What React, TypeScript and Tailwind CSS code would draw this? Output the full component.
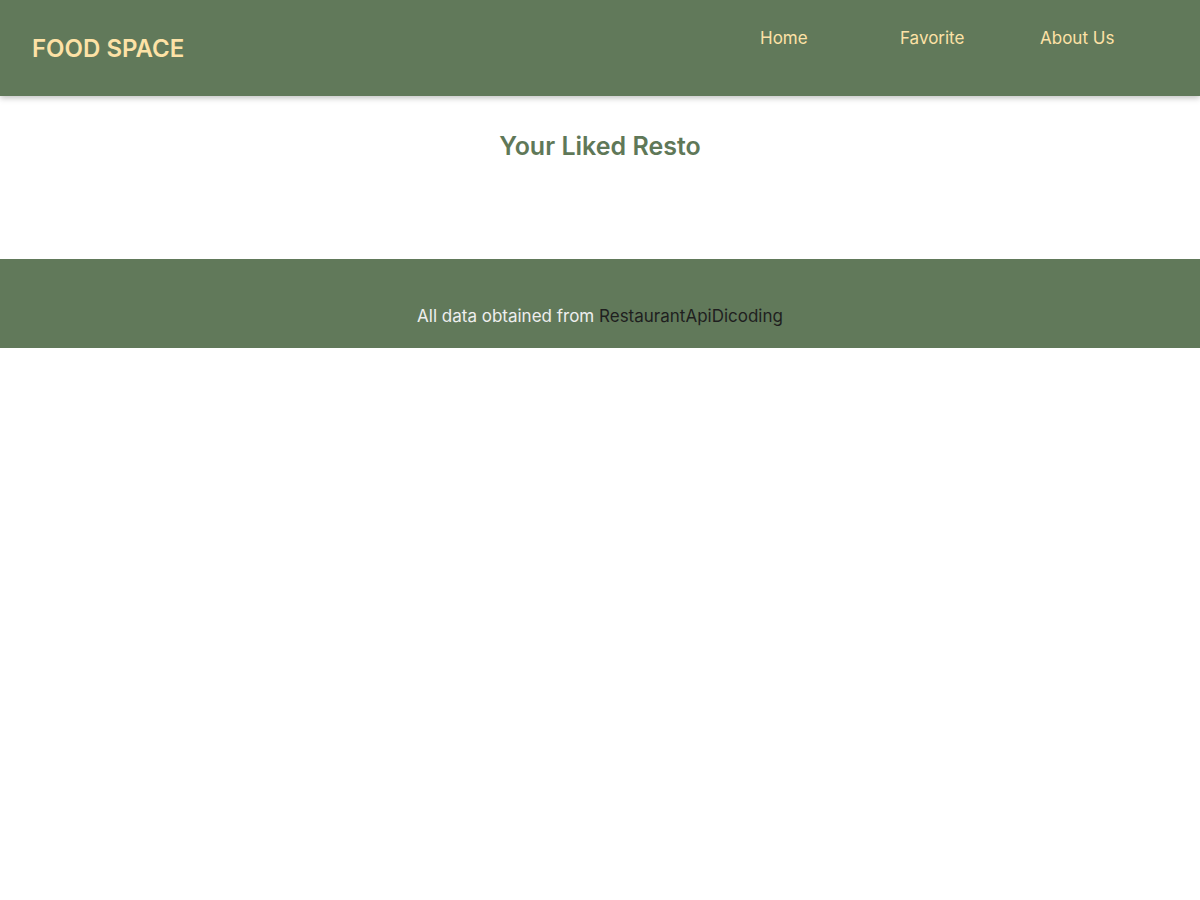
export default function App() {
  return (
    <div className="min-h-screen bg-white font-['Inter','Open_Sans',sans-serif]">
      <header className="h-[96px] bg-[#61795a] shadow-[0_2px_6px_rgba(0,0,0,0.25)] flex items-start relative z-10">
        <a href="#" className="ml-[32px] mt-[35px] text-[24px] leading-[28px] font-semibold text-[#fde2a6]">
          FOOD SPACE
        </a>
        <nav className="ml-auto mr-[20px] mt-[26px]">
          <ul className="flex">
            <li className="w-[140px]">
              <a href="#" className="text-[17px] leading-[22px] text-[#fde2a6]">Home</a>
            </li>
            <li className="w-[140px]">
              <a href="#" className="text-[17px] leading-[22px] text-[#fde2a6]">Favorite</a>
            </li>
            <li className="w-[140px]">
              <a href="#" className="text-[17px] leading-[22px] text-[#fde2a6]">About Us</a>
            </li>
          </ul>
        </nav>
      </header>

      <main className="h-[163px] pt-[33px]">
        <h2 className="text-center text-[25px] leading-[34px] font-semibold text-[#5f7858]">
          Your Liked Resto
        </h2>
      </main>

      <footer className="h-[89px] bg-[#61795a] flex justify-center pt-[46px]">
        <p className="text-[17px] leading-[22px] text-[#eeeeee]">
          All data obtained from <a href="#" className="text-[#1f1f1f]">RestaurantApiDicoding</a>
        </p>
      </footer>
    </div>
  )
}
